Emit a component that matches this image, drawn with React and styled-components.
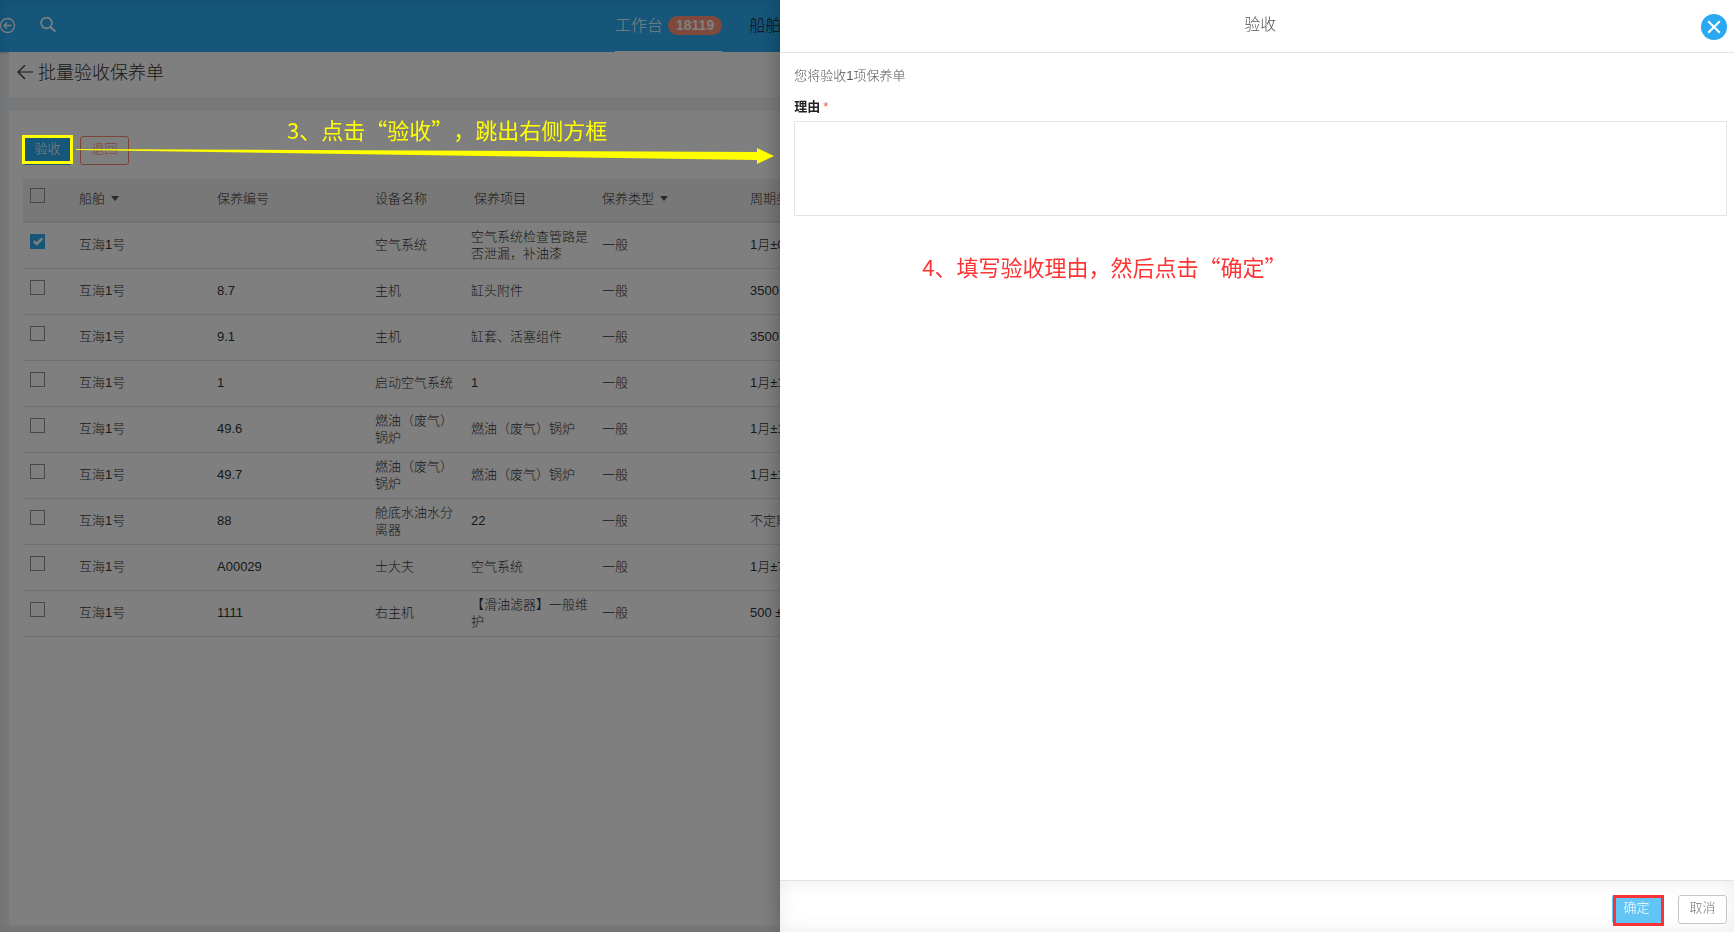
import { useState } from "react";
import styled, { createGlobalStyle } from "styled-components";

const GlobalStyle = createGlobalStyle`
  * {
    box-sizing: border-box;
  }
  body {
    margin: 0;
    background-color: #f0f3f6;
    color: #333;
    font-family: "Liberation Sans", "Noto Sans CJK SC", sans-serif;
    font-size: 13px;
    font-weight: 300;
    line-height: 17px;
  }
  button,
  textarea {
    font: inherit;
  }
`;

const Page = styled.div`
  display: flex;
  flex-direction: column;
  min-height: 100vh;
  overflow: hidden;
`;

const TopBar = styled.header`
  display: flex;
  height: 52px;
  background-color: #2aacf4;
  color: #fff;
  box-shadow: 0 1px 2px rgba(0, 0, 0, 0.2);
`;

const TopTools = styled.div`
  display: flex;
  flex: 0 0 615px;
  align-items: center;
  gap: 24px;
  padding-bottom: 2px;
`;

const IconButton = styled.button`
  display: flex;
  padding: 0;
  border: none;
  background: none;
  color: inherit;
  cursor: pointer;
`;

const Nav = styled.nav`
  display: flex;
  gap: 27px;
`;

const NavLink = styled.a`
  display: flex;
  align-items: center;
  gap: 5px;
  height: 52px;
  border-bottom: 1px solid ${(props) => (props.$active ? "#fff" : "transparent")};
  color: ${(props) => (props.$active ? "#fff" : "#222")};
  font-size: 16px;
  text-decoration: none;
  white-space: nowrap;
`;

const Badge = styled.span`
  padding: 0 8px;
  border-radius: 10px;
  background-color: #ff9478;
  font-size: 14px;
  font-weight: 700;
  line-height: 19px;
`;

const TitleBar = styled.div`
  display: flex;
  align-items: center;
  gap: 4px;
  height: 45px;
  margin: 0 9px 14px;
  padding: 0 8px 4px;
  background-color: #fff;
`;

const PageTitle = styled.h1`
  margin: 0;
  font-size: 18px;
  font-weight: 300;
  line-height: 24px;
`;

const Card = styled.main`
  flex: 1;
  margin: 0 9px 7px;
  padding: 25px 14px;
  background-color: #fff;
`;

const Toolbar = styled.div`
  position: relative;
  display: flex;
  gap: 8px;
  margin-bottom: 14px;
`;

const Button = styled.button`
  width: 49px;
  height: 29px;
  padding: 0 0 4px;
  border: 1px solid ${(props) => props.$border};
  border-radius: 3px;
  background-color: ${(props) => props.$fill || "#fff"};
  color: ${(props) => props.$color};
  cursor: pointer;
`;

/* Coloured frame that sits over the button to press */
const Marked = styled.span`
  position: relative;
  display: flex;

  &::after {
    content: "";
    position: absolute;
    z-index: 30;
    inset: ${(props) => props.$inset};
    border: 3px solid ${(props) => props.$color};
    pointer-events: none;
  }
`;

const Note = styled.p`
  margin: 0;
  color: ${(props) => props.$color};
  font-family: "Noto Sans CJK SC", sans-serif;
  font-size: 22px;
  font-weight: 400;
  line-height: 32px;
  text-spacing-trim: space-all;
  white-space: nowrap;
`;

const StepNote = styled(Note)`
  position: absolute;
  z-index: 30;
  top: -23px;
  left: 264px;
`;

const Arrow = styled.svg`
  position: absolute;
  z-index: 30;
  top: 12px;
  left: 53px;
`;

const Table = styled.table`
  width: 100%;
  border-collapse: collapse;
  table-layout: fixed;
`;

const Th = styled.th`
  height: 43px;
  padding: 0 4px 3px ${(props) => (props.$indent ? "11px" : "8px")};
  border-bottom: 2px solid #e2e2e2;
  background-color: #f0f0f0;
  font-weight: 300;
  text-align: left;
  white-space: nowrap;
`;

const Td = styled.td`
  height: 46px;
  padding: 0 4px 1px 8px;
  border-bottom: 1px solid #e2e2e2;
  text-spacing-trim: space-all;
`;

const Caret = styled.span`
  display: inline-block;
  margin-left: 6px;
  border: 4px solid transparent;
  border-top: 5px solid #555;
  border-bottom: none;
  vertical-align: 2px;
`;

const CheckWrap = styled.label`
  position: relative;
  display: block;
  width: 15px;
  height: 15px;
  margin: 0 0 6px -1px;

  svg {
    position: absolute;
    top: 3px;
    left: 3px;
    pointer-events: none;
  }
`;

const CheckBox = styled.input`
  display: block;
  width: 15px;
  height: 15px;
  margin: 0;
  border: 1px solid #8c909c;
  appearance: none;

  &:checked {
    border-color: #2aacf4;
    background-color: #2aacf4;
  }
`;

const Mask = styled.div`
  position: fixed;
  z-index: 10;
  inset: 0;
  background-color: rgba(0, 0, 0, 0.5);
  box-shadow: inset 0 0 12px rgba(0, 0, 0, 0.1);
`;

const Drawer = styled.aside`
  position: fixed;
  z-index: 20;
  top: 0;
  right: 0;
  bottom: 0;
  display: flex;
  flex-direction: column;
  width: 55%;
  background-color: #fff;
  box-shadow: 0 0 20px rgba(0, 0, 0, 0.3);
`;

const DrawerHeader = styled.div`
  display: flex;
  align-items: center;
  height: 53px;
  padding: 2px 7px 0 39px;
  border-bottom: 1px solid #e4e4e6;
`;

const DrawerTitle = styled.h2`
  flex: 1;
  margin: 0;
  padding-bottom: 4px;
  color: #555;
  font-size: 16px;
  font-weight: 300;
  line-height: 24px;
  text-align: center;
`;

const CloseButton = styled(IconButton)`
  align-items: center;
  justify-content: center;
  width: 26px;
  height: 26px;
  border-radius: 50%;
  background-color: #2aa8f2;
  color: #fff;
`;

const DrawerBody = styled.div`
  flex: 1;
  padding: 14px 7px 14px 14px;
`;

const Tip = styled.p`
  margin: 0 0 14px;
  color: #555;
`;

const FieldLabel = styled.label`
  display: block;
  margin-bottom: 6px;
  color: #222;
  font-weight: 700;
`;

const Required = styled.span`
  margin-left: 3px;
  color: #f0604a;
  font-weight: 400;
`;

const Reason = styled.textarea`
  display: block;
  width: 100%;
  height: 95px;
  margin-bottom: 34px;
  padding: 8px;
  border: 1px solid #e3e5e8;
  outline: none;
  resize: none;
`;

const ReasonNote = styled(Note)`
  padding-left: 128px;
`;

const DrawerFooter = styled.div`
  display: flex;
  justify-content: flex-end;
  gap: 17px;
  height: 52px;
  padding: 14px 7px 0;
  border-top: 1px solid #e2e2e2;
  box-shadow: inset 0 0 20px rgba(0, 0, 0, 0.08);
`;

const columns = [
  { label: "船舶", width: 138, sort: true },
  { label: "保养编号", width: 158 },
  { label: "设备名称", width: 96 },
  { label: "保养项目", width: 131, indent: true },
  { label: "保养类型", width: 148, sort: true },
  { label: "周期类型" },
];

const orders = [
  ["互海1号", "", "空气系统", "空气系统检查管路是否泄漏，补油漆", "一般", "1月±0天"],
  ["互海1号", "8.7", "主机", "缸头附件", "一般", "3500"],
  ["互海1号", "9.1", "主机", "缸套、活塞组件", "一般", "3500"],
  ["互海1号", "1", "启动空气系统", "1", "一般", "1月±1天"],
  ["互海1号", "49.6", "燃油（废气）锅炉", "燃油（废气）锅炉", "一般", "1月±1天"],
  ["互海1号", "49.7", "燃油（废气）锅炉", "燃油（废气）锅炉", "一般", "1月±1天"],
  ["互海1号", "88", "舱底水油水分离器", "22", "一般", "不定期"],
  ["互海1号", "A00029", "士大夫", "空气系统", "一般", "1月±7天"],
  ["互海1号", "1111", "右主机", "【滑油滤器】一般维护", "一般", "500 ±"],
];

const Check = ({ label, checked, onChange }) => (
  <CheckWrap>
    <CheckBox type="checkbox" aria-label={label} checked={checked} onChange={onChange} />
    {checked && (
      <svg width="10" height="9" viewBox="0 0 10 9" fill="none" stroke="#fff" strokeWidth="2.6">
        <path d="M0.8 4.2 L3.8 7 L9.2 1.4" />
      </svg>
    )}
  </CheckWrap>
);

const OrderTable = () => {
  const [selected, setSelected] = useState([0]);
  const allSelected = selected.length === orders.length;

  const toggle = (index) => {
    setSelected(
      selected.includes(index) ? selected.filter((i) => i !== index) : [...selected, index]
    );
  };

  return (
    <Table>
      <colgroup>
        <col width="48" />
        {columns.map((column) => (
          <col key={column.label} width={column.width} />
        ))}
      </colgroup>
      <thead>
        <tr>
          <Th>
            <Check
              label="全选"
              checked={allSelected}
              onChange={() => setSelected(allSelected ? [] : orders.map((_, i) => i))}
            />
          </Th>
          {columns.map((column) => (
            <Th key={column.label} $indent={column.indent}>
              {column.label}
              {column.sort && <Caret />}
            </Th>
          ))}
        </tr>
      </thead>
      <tbody>
        {orders.map((order, index) => (
          <tr key={index}>
            <Td>
              <Check
                label={`选择第${index + 1}项`}
                checked={selected.includes(index)}
                onChange={() => toggle(index)}
              />
            </Td>
            {order.map((value, i) => (
              <Td key={i}>{value}</Td>
            ))}
          </tr>
        ))}
      </tbody>
    </Table>
  );
};

const AcceptDrawer = () => {
  const [reason, setReason] = useState("");

  return (
    <Drawer role="dialog" aria-labelledby="drawer-title">
      <DrawerHeader>
        <DrawerTitle id="drawer-title">验收</DrawerTitle>
        <CloseButton type="button" aria-label="关闭">
          <svg width="14" height="14" viewBox="0 0 14 14" stroke="currentColor" strokeWidth="2.2">
            <path d="M1.2 1.2 L12.8 12.8 M12.8 1.2 L1.2 12.8" />
          </svg>
        </CloseButton>
      </DrawerHeader>
      <DrawerBody>
        <Tip>您将验收1项保养单</Tip>
        <FieldLabel htmlFor="reason">
          理由
          <Required>*</Required>
        </FieldLabel>
        <Reason id="reason" value={reason} onChange={(e) => setReason(e.target.value)} />
        <ReasonNote $color="#ff3333">4、填写验收理由，然后点击“确定”</ReasonNote>
      </DrawerBody>
      <DrawerFooter>
        <Marked $color="#fa3238" $inset="0 -3px 6px 1px">
          <Button type="button" $fill="#63c5f5" $border="#63c5f5" $color="#fff">
            确定
          </Button>
        </Marked>
        <Button type="button" $border="#c4c5cc" $color="#777">
          取消
        </Button>
      </DrawerFooter>
    </Drawer>
  );
};

export default function App() {
  return (
    <>
      <GlobalStyle />
      <Page>
        <TopBar>
          <TopTools>
            <IconButton type="button" aria-label="收起菜单">
              <svg width="16" height="16" viewBox="0 0 16 16" fill="none" stroke="currentColor">
                <circle cx="7.5" cy="8.5" r="7" strokeWidth="1.3" />
                <path d="M11.5 8.5 H4 M7 5.5 L4 8.5 L7 11.5" strokeWidth="1.3" />
              </svg>
            </IconButton>
            <IconButton type="button" aria-label="搜索">
              <svg width="16" height="16" viewBox="0 0 16 16" fill="none" stroke="currentColor">
                <circle cx="6.5" cy="6" r="5.4" strokeWidth="1.6" />
                <path d="M10.4 10 L15.4 14.6" strokeWidth="2" />
              </svg>
            </IconButton>
          </TopTools>
          <Nav>
            <NavLink href="#" $active>
              工作台<Badge>18119</Badge>
            </NavLink>
            <NavLink href="#">船舶</NavLink>
          </Nav>
        </TopBar>
        <TitleBar>
          <IconButton type="button" aria-label="返回">
            <svg width="17" height="16" viewBox="0 0 17 16" fill="none" stroke="currentColor">
              <path d="M16 7 H1 M8 0.2 L1 7 L8 14" strokeWidth="1.2" />
            </svg>
          </IconButton>
          <PageTitle>批量验收保养单</PageTitle>
        </TitleBar>
        <Card>
          <Toolbar>
            <Marked $color="#ffff00" $inset="-1px -1px 1px -1px">
              <Button type="button" $fill="#2aacf4" $border="#2aacf4" $color="#fff">
                验收
              </Button>
            </Marked>
            <Button type="button" $border="#f7866c" $color="#f7866c">
              退回
            </Button>
            <StepNote $color="#ffff00">3、点击“验收”，跳出右侧方框</StepNote>
            <Arrow width="698" height="18" viewBox="0 0 698 18" fill="#ffff00">
              <path d="M0 1 L681 4 V0 L698 8 L681 16 V12 L0 2 Z" />
            </Arrow>
          </Toolbar>
          <OrderTable />
        </Card>
      </Page>
      <Mask />
      <AcceptDrawer />
    </>
  );
}
